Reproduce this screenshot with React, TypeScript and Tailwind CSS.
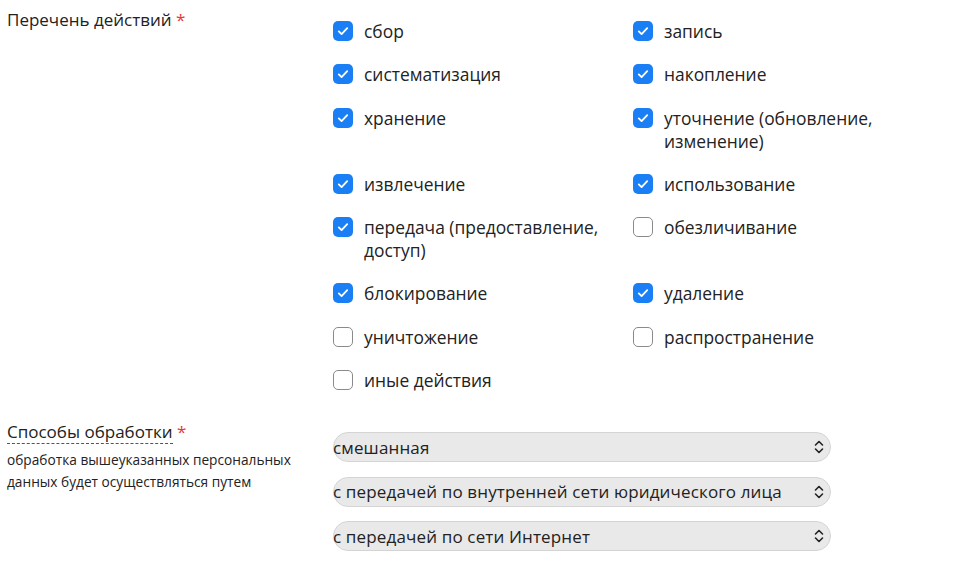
import { ReactNode } from "react";

type Action = { label: string; checked: boolean };

const actions: Action[] = [
  { label: "сбор", checked: true },
  { label: "запись", checked: true },
  { label: "систематизация", checked: true },
  { label: "накопление", checked: true },
  { label: "хранение", checked: true },
  { label: "уточнение (обновление, изменение)", checked: true },
  { label: "извлечение", checked: true },
  { label: "использование", checked: true },
  { label: "передача (предоставление, доступ)", checked: true },
  { label: "обезличивание", checked: false },
  { label: "блокирование", checked: true },
  { label: "удаление", checked: true },
  { label: "уничтожение", checked: false },
  { label: "распространение", checked: false },
  { label: "иные действия", checked: false },
];

const methods = [
  "смешанная",
  "с передачей по внутренней сети юридического лица",
  "с передачей по сети Интернет",
];

function Box({ checked }: { checked: boolean }) {
  if (checked) {
    return (
      <span className="mt-[1px] flex h-[20px] w-[20px] shrink-0 items-center justify-center rounded-[5px] bg-[#1a7ff4]">
        <svg viewBox="0 0 20 20" className="h-[14px] w-[14px]" fill="none" aria-hidden="true">
          <path d="M4 10.5 8 14.5 16 6" stroke="white" strokeWidth="2.6" strokeLinecap="round" strokeLinejoin="round" />
        </svg>
      </span>
    );
  }
  return <span className="mt-[1px] h-[20px] w-[20px] shrink-0 rounded-[5px] border-[1.5px] border-[#8a8a8a] bg-white" />;
}

function Check({ label, checked }: Action) {
  return (
    <label className="flex items-start gap-[11px] pr-4">
      <Box checked={checked} />
      <span className="leading-[23px]">{label}</span>
    </label>
  );
}

function Field({ label, hint, children }: { label: ReactNode; hint?: string; children: ReactNode }) {
  return (
    <div className="flex">
      <div className="w-[326px] shrink-0">
        {label}
        {hint ? <div className="mt-[7px] w-[300px] text-[13.7px] leading-[22px]">{hint}</div> : null}
      </div>
      {children}
    </div>
  );
}

function Select({ value }: { value: string }) {
  return (
    <div className="flex h-[30px] w-[498px] items-center justify-between rounded-full border border-[#d4d4d4] bg-[#e9e9e9] pr-[6px] text-[17px] leading-none tracking-[0.15px]">
      <span className="-ml-[1px]">{value}</span>
      <svg viewBox="0 0 10 14" className="h-[14px] w-[10px]" fill="none" aria-hidden="true">
        <path d="M1.5 5 5 1.5 8.5 5M1.5 9 5 12.5 8.5 9" stroke="#222" strokeWidth="1.6" strokeLinecap="round" strokeLinejoin="round" />
      </svg>
    </div>
  );
}

export default function App() {
  return (
    <div className="min-h-screen bg-white px-[7px] text-[#222]" style={{ fontFamily: '"Open Sans", "Noto Sans", sans-serif' }}>
      <div className="pt-[10px]">
        <Field
          label={
            <div className="text-[17px] leading-5">
              Перечень действий <span className="text-[#e53935]">*</span>
            </div>
          }
        >
          <div className="grid w-[600px] grid-cols-2 gap-y-[20.3px] pt-[10px] text-[17.4px]">
            {actions.map((a) => (
              <Check key={a.label} {...a} />
            ))}
          </div>
        </Field>
      </div>

      <div className="mt-[30px]">
        <Field
          label={
            <div className="text-[17px] leading-5">
              <span className="border-b border-dashed border-[#555]">Способы обработки</span>{" "}
              <span className="text-[#e53935]">*</span>
            </div>
          }
          hint="обработка вышеуказанных персональных данных будет осуществляться путем"
        >
          <div className="flex flex-col gap-[14.5px] pt-[10px]">
            {methods.map((m) => (
              <Select key={m} value={m} />
            ))}
          </div>
        </Field>
      </div>
    </div>
  );
}
